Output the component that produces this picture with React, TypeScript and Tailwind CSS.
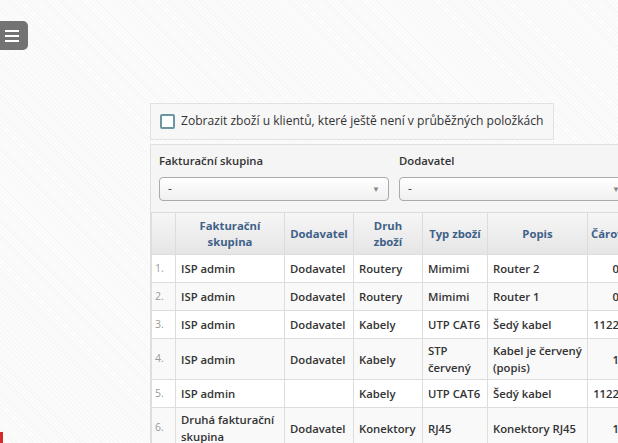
import { Fragment } from 'react';

type Row = {
  group: string;
  supplier: string;
  kind: string;
  type: string;
  desc: string;
  code: string;
};

const rows: Row[] = [
  { group: 'ISP admin', supplier: 'Dodavatel', kind: 'Routery', type: 'Mimimi', desc: 'Router 2', code: '0' },
  { group: 'ISP admin', supplier: 'Dodavatel', kind: 'Routery', type: 'Mimimi', desc: 'Router 1', code: '0' },
  { group: 'ISP admin', supplier: 'Dodavatel', kind: 'Kabely', type: 'UTP CAT6', desc: 'Šedý kabel', code: '1122' },
  { group: 'ISP admin', supplier: 'Dodavatel', kind: 'Kabely', type: 'STP červený', desc: 'Kabel je červený (popis)', code: '1' },
  { group: 'ISP admin', supplier: '', kind: 'Kabely', type: 'UTP CAT6', desc: 'Šedý kabel', code: '1122' },
  { group: 'Druhá fakturační skupina', supplier: 'Dodavatel', kind: 'Konektory', type: 'RJ45', desc: 'Konektory RJ45', code: '1' },
];

const headers = [
  { label: [''], width: 'w-[24px]' },
  { label: ['Fakturační', 'skupina'], width: 'w-[109px]' },
  { label: ['Dodavatel'], width: 'w-[69px]' },
  { label: ['Druh', 'zboží'], width: 'w-[69px]' },
  { label: ['Typ zboží'], width: 'w-[65px]' },
  { label: ['Popis'], width: 'w-[100px]' },
  { label: ['Čárový kód'], width: 'w-[34px]' },
];

const cell = 'border border-[#dddddd] pl-[5px] pr-[2px] py-[3px] align-middle font-semibold leading-[17px]';

function Select() {
  return (
    <div className="flex h-[24px] w-[230px] items-center justify-between rounded-[4px] border border-[#aaaaaa] bg-[linear-gradient(#ffffff,#f0f0f0)] pl-[8px] pr-[8px] text-[12px] text-[#444]">
      <span>-</span>
      <span className="text-[8px] text-[#888]">▼</span>
    </div>
  );
}

export default function App() {
  return (
    <div
      className="relative h-[443px] w-[618px] overflow-hidden bg-[repeating-linear-gradient(45deg,#f6f6f6_0px,#f6f6f6_1px,#fcfcfc_1px,#fcfcfc_3px)] text-[#333]"
      style={{ fontFamily: '"Open Sans", "Noto Sans", sans-serif' }}
    >
      {/* floating menu button */}
      <div className="absolute left-0 top-[21px] flex h-[29px] w-[28px] flex-col justify-center gap-[3px] rounded-r-[5px] bg-[#737373] pl-[5px]">
        <div className="h-[2px] w-[14px] bg-white" />
        <div className="h-[2px] w-[14px] bg-white" />
        <div className="h-[2px] w-[14px] bg-white" />
      </div>
      <div className="absolute bottom-0 left-0 h-[11px] w-[3px] bg-[#d42a2a]" />

      <div className="flex w-[700px] flex-col pl-[150px] pt-[103px]">
        <div className="flex h-[37px] w-[404px] items-center gap-[6px] border border-[#e2e2e2] bg-[#f7f7f7] px-[9px]">
          <div className="h-[15px] w-[15px] shrink-0 rounded-[2px] border-2 border-[#6b95a1] bg-white" />
          <span className="whitespace-nowrap text-[12.1px] text-[#333]">
            Zobrazit zboží u klientů, které ještě není v průběžných položkách
          </span>
        </div>

        <div className="mt-[4px] w-[540px] border border-b-0 border-[#e0e0e0] bg-[#f5f5f5]">
          <div className="flex gap-[10px] px-[8px] pb-[11px] pt-[8px]">
            <div className="flex w-[230px] flex-col gap-[8px]">
              <span className="text-[11.3px] font-semibold leading-[16px] text-[#333]">Fakturační skupina</span>
              <Select />
            </div>
            <div className="flex w-[230px] flex-col gap-[8px]">
              <span className="text-[11.3px] font-semibold leading-[16px] text-[#333]">Dodavatel</span>
              <Select />
            </div>
          </div>

          <table className="w-[470px] table-fixed border-collapse text-[11.3px]">
            <thead>
              <tr className="h-[42px] bg-[linear-gradient(#f6f6f6,#e5e5e5)]">
                {headers.map((h, i) => (
                  <th
                    key={i}
                    className={`${h.width} border border-[#dcdcdc] px-[3px] align-middle font-bold leading-[16px] text-[#3f6189] ${
                      i === 6 ? 'whitespace-nowrap text-left' : 'text-center'
                    }`}
                  >
                    {h.label.map((l, j) => (
                      <Fragment key={j}>
                        {j > 0 && <br />}
                        {l}
                      </Fragment>
                    ))}
                  </th>
                ))}
              </tr>
            </thead>
            <tbody>
              {rows.map((r, i) => (
                <tr key={i} className={`h-[28px] ${i % 2 === 0 ? 'bg-white' : 'bg-[#f9f9f9]'}`}>
                  <td className="border border-[#dddddd] px-[3px] py-[3px] align-middle text-[10.5px] text-[#999]">
                    {i + 1}.
                  </td>
                  <td className={cell}>{r.group}</td>
                  <td className={cell}>{r.supplier}</td>
                  <td className={cell}>{r.kind}</td>
                  <td className={cell}>{r.type}</td>
                  <td className={cell}>{r.desc}</td>
                  <td className={`${cell} whitespace-nowrap text-right`}>{r.code}</td>
                </tr>
              ))}
            </tbody>
          </table>
        </div>
      </div>
    </div>
  );
}
